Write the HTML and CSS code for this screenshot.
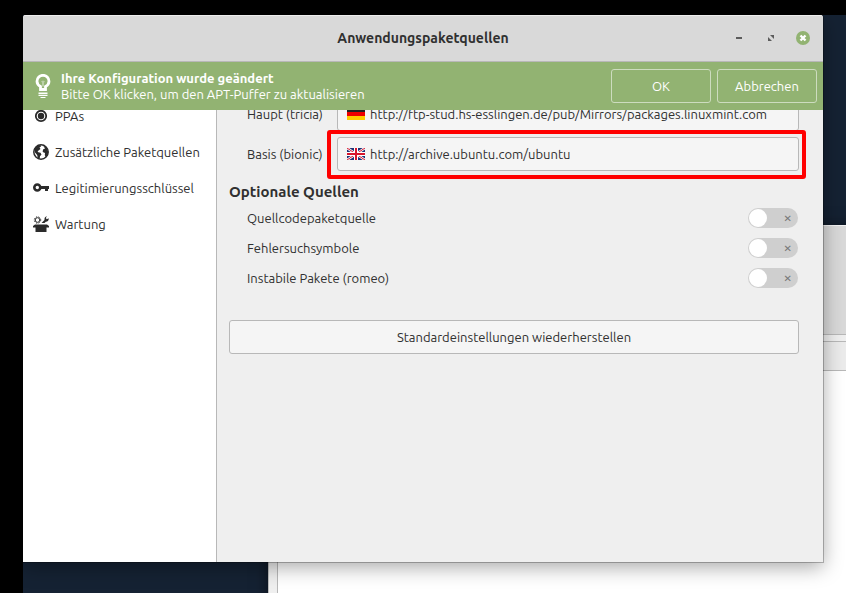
FILE: index.html
```html
<!DOCTYPE html>
<html lang="de">
<head>
    <meta charset="UTF-8">
    <meta name="viewport" content="width=device-width, initial-scale=1.0">
    <title>Anwendungspaketquellen</title>
    <link rel="stylesheet" href="styles.css">
</head>
<body>

    <div class="desktop">
        <div class="back-window">
            <div class="back-title"></div>
            <div class="back-toolbar"></div>
            <div class="back-page"></div>
        </div>

        <div class="window">
            <header class="titlebar">
                <h1>Anwendungspaketquellen</h1>
                <div class="window-buttons">
                    <button aria-label="Minimieren">
                        <svg width="16" height="16" viewBox="0 0 16 16"><path d="M5 7h6v2H5z" fill="#5c5c5c"/></svg>
                    </button>
                    <button aria-label="Maximieren">
                        <svg width="16" height="16" viewBox="0 0 16 16"><path d="M7 5h4v4zM5 7v4h4z" fill="#5c5c5c"/></svg>
                    </button>
                    <button aria-label="Schließen">
                        <svg width="16" height="16" viewBox="0 0 16 16"><circle cx="8" cy="8" r="7" fill="#92b372"/><path d="M5.500 5.500l5 5M10.500 5.500l-5 5" stroke="#fff" stroke-width="2.400"/></svg>
                    </button>
                </div>
            </header>

            <div class="infobar">
                <svg class="bulb" width="16" height="24" viewBox="0 0 16 24">
                    <path d="M5.500 15.500v-3C3.400 11.400 2 9.700 2 7.300a6 6 0 0 1 12 0c0 2.400-1.400 4.100-3.500 5.200v3z" fill="none" stroke="#fff" stroke-width="2.800"/>
                    <path d="M6 7.500l2-1 2 1-1 1v4H7v-4z" fill="#fff" opacity=".4"/>
                    <path d="M3.500 18.500h9V20h-9zM3.500 20.800h9V22h-9zM5.500 23h5v1h-5z" fill="#fff"/>
                </svg>
                <div class="info-text">
                    <strong>Ihre Konfiguration wurde geändert</strong>
                    <span>Bitte OK klicken, um den APT-Puffer zu aktualisieren</span>
                </div>
                <div class="info-actions">
                    <button>OK</button>
                    <button>Abbrechen</button>
                </div>
            </div>

            <div class="content">
                <nav class="sidebar">
                    <a href="#ppas">
                        <svg width="16" height="16" viewBox="0 0 16 16"><circle cx="8" cy="8" r="5.200" fill="none" stroke="#2b2b2b" stroke-width="1.800"/><circle cx="8" cy="8" r="3.200" fill="#2b2b2b"/></svg>
                        PPAs
                    </a>
                    <a href="#paketquellen">
                        <svg width="16" height="16" viewBox="0 0 16 16"><circle cx="8" cy="8" r="7.200" fill="#fff" stroke="#2b2b2b" stroke-width="1.500"/><path d="M1.200 6C2 3 4 1.300 7.500 1l.5 1.500-1.500 1L7.500 5 5.500 6.500 4.500 8l3 .8 1 1.700-1.500 1.700-.3 2.600-2-.7-.5-3L2 8.500zM10 1.300l4 2.700 1.200 4-.7 3.500-1.700 2-1-2.500.2-2-2.300-1L10 5.500l2-1z" fill="#2b2b2b"/></svg>
                        Zusätzliche Paketquellen
                    </a>
                    <a href="#schluessel">
                        <svg width="16" height="16" viewBox="0 0 16 16"><circle cx="4.300" cy="7.500" r="3" fill="none" stroke="#2b2b2b" stroke-width="2.600"/><path d="M8 6h8v3h-1v2h-3V9H8z" fill="#2b2b2b"/></svg>
                        Legitimierungsschlüssel
                    </a>
                    <a href="#wartung">
                        <svg width="16" height="16" viewBox="0 0 16 16"><circle cx="4.500" cy="4" r="2.300" fill="none" stroke="#2b2b2b" stroke-width="1"/><circle cx="4.500" cy="4" r="3.200" fill="none" stroke="#2b2b2b" stroke-width="1" stroke-dasharray="1.300"/><path d="M8.500 7l3-3c-.3-2 .5-3.300 2.500-3.800L12.800 2l1 1.200 1.900-1c.2 2.200-.9 3.400-2.900 3.600L11.500 7zM2 8.500h12l2 1.500v1.500h-2.500V16h-11v-4.500H0V10z" fill="#2b2b2b"/></svg>
                        Wartung
                    </a>
                </nav>

                <main class="settings">
                    <div class="mirrors">
                        <label for="main-mirror">Haupt (tricia)</label>
                        <div class="mirror">
                            <button id="main-mirror">
                                <svg width="18" height="12" viewBox="0 0 18 12"><path d="M0 0h18v4H0z" fill="#222"/><path d="M0 4h18v4H0z" fill="#e00"/><path d="M0 8h18v4H0z" fill="#fc0"/></svg>
                                http://ftp-stud.hs-esslingen.de/pub/Mirrors/packages.linuxmint.com
                            </button>
                        </div>
                        <label for="base-mirror">Basis (bionic)</label>
                        <div class="mirror marked">
                            <button id="base-mirror">
                                <svg width="18" height="12" viewBox="0 0 18 12"><path d="M0 0h18v12H0z" fill="#1f3277"/><path d="M0 0l18 12M18 0L0 12" stroke="#fff" stroke-width="2.400"/><path d="M0 0l18 12M18 0L0 12" stroke="#d8142c" stroke-width="1"/><path d="M9 0v12M0 6h18" stroke="#fff" stroke-width="4"/><path d="M9 0v12M0 6h18" stroke="#d8142c" stroke-width="2"/></svg>
                                http://archive.ubuntu.com/ubuntu
                            </button>
                        </div>
                    </div>

                    <h2>Optionale Quellen</h2>
                    <div class="options">
                        <div class="option">
                            <label for="source-code">Quellcodepaketquelle</label>
                            <input type="checkbox" class="switch" id="source-code">
                        </div>
                        <div class="option">
                            <label for="debug-symbols">Fehlersuchsymbole</label>
                            <input type="checkbox" class="switch" id="debug-symbols">
                        </div>
                        <div class="option">
                            <label for="unstable">Instabile Pakete (romeo)</label>
                            <input type="checkbox" class="switch" id="unstable">
                        </div>
                    </div>

                    <button class="restore">Standardeinstellungen wiederherstellen</button>
                </main>
            </div>
        </div>
    </div>

</body>
</html>
```

FILE: styles.css
```css
* {
    box-sizing: border-box;
}

body {
    margin: 0;
    height: 100vh;
    padding: 15px 0 0 23px;
    background-color: #000;
    color: #303030;
    font-family: Ubuntu, "Noto Sans", sans-serif;
    font-size: 13px;
    line-height: 16px;
    overflow: hidden;
}

button {
    font: inherit;
    color: inherit;
    cursor: pointer;
}

.desktop {
    position: relative;
    height: 100%;
    background-color: #152233;
    overflow: hidden;
}

/* window behind the dialog */
.back-window {
    position: absolute;
    top: 210px;
    left: 245px;
    right: -40px;
    bottom: -40px;
    display: flex;
    flex-direction: column;
    background-color: #efefef;
    border-top: 1px solid #f3f3f3;
    border-left: 1px solid #bbb;
    box-shadow: 0 2px 14px rgba(0, 0, 0, 0.5);
}

.back-title {
    height: 109px;
    background-color: #d9d9d9;
    border-bottom: 1px solid #b8b8b8;
}

.back-toolbar {
    height: 30px;
    margin: 6px 0 0 8px;
    background-color: #ebebeb;
    border: 1px solid #b8b8b8;
}

.back-page {
    flex: 1;
    margin-left: 8px;
    background-color: #fff;
    border-left: 1px solid #b8b8b8;
}

/* dialog */
.window {
    position: absolute;
    top: 0;
    left: 0;
    right: 23px;
    bottom: 31px;
    display: flex;
    flex-direction: column;
    background-color: #efefef;
    border-radius: 3px 3px 0 0;
    box-shadow: 0 0 0 1px rgba(0, 0, 0, 0.25), 0 5px 20px rgba(0, 0, 0, 0.35);
    overflow: hidden;
}

.titlebar {
    display: grid;
    grid-template-columns: 1fr auto 1fr;
    align-items: center;
    height: 47px;
    padding-bottom: 2px;
    background-color: #d9d9d9;
    border-top: 1px solid #eee;
    border-bottom: 1px solid #b8b8b8;
}

.titlebar h1 {
    grid-column: 2;
    margin: 0;
    font-size: 14px;
}

.window-buttons {
    display: flex;
    justify-content: flex-end;
    gap: 16px;
    padding-right: 12px;
}

.window-buttons button {
    display: flex;
    padding: 0;
    border: none;
    background: none;
}

.infobar {
    display: flex;
    align-items: center;
    gap: 10px;
    height: 48px;
    padding: 0 6px 0 12px;
    background-color: #92b372;
    color: #fff;
}

.info-text {
    display: flex;
    flex: 1;
    flex-direction: column;
}

.info-actions {
    display: flex;
    gap: 6px;
}

.info-actions button {
    width: 100px;
    height: 34px;
    background: none;
    border: 1px solid #cddcbf;
    border-radius: 3px;
}

.content {
    display: flex;
    flex: 1;
    min-height: 0;
    overflow: hidden;
}

.sidebar {
    width: 194px;
    padding-left: 10px;
    background-color: #fff;
    border-right: 1px solid #b8b8b8;
    white-space: nowrap;
}

.sidebar a {
    display: flex;
    align-items: center;
    gap: 6px;
    height: 36px;
    color: inherit;
    text-decoration: none;
}

/* both panes are scrolled a little under the info bar */
.sidebar a:first-child {
    margin-top: -12px;
}

.mirrors {
    display: grid;
    grid-template-columns: 84px 1fr;
    align-items: center;
    gap: 6px;
    margin-top: -13px;
    padding-left: 18px;
    white-space: nowrap;
}

.settings {
    flex: 1;
    padding: 0 24px 0 12px;
}

.mirror {
    position: relative;
}

.mirror button {
    display: flex;
    align-items: center;
    gap: 5px;
    width: 100%;
    height: 34px;
    padding: 0 9px;
    background-color: #f5f5f5;
    border: 1px solid #b8b8b8;
    border-radius: 3px;
}

.marked::after {
    content: "";
    position: absolute;
    inset: -7px -7px -8px -10px;
    border: 4px solid #f00;
    border-radius: 3px;
    pointer-events: none;
}

.settings h2 {
    margin: 10px 0 0;
    font-size: 15px;
    line-height: 22px;
}

.options {
    padding-left: 18px;
}

.option {
    display: flex;
    align-items: center;
    justify-content: space-between;
    height: 30px;
}

.switch {
    appearance: none;
    display: flex;
    align-items: center;
    justify-content: space-between;
    width: 50px;
    height: 20px;
    margin: 0 1px 0 0;
    padding: 0 6px 0 1px;
    background-color: #cfcfcf;
    border-radius: 10px;
    cursor: pointer;
}

.switch::before {
    content: "";
    width: 18px;
    height: 18px;
    background-color: #fff;
    border-radius: 50%;
}

.switch::after {
    content: "✕";
    color: #777;
    font-family: "DejaVu Sans", sans-serif;
    font-size: 10px;
    font-weight: bold;
}

.switch:checked {
    flex-direction: row-reverse;
    background-color: #92b372;
}

.restore {
    width: 100%;
    height: 34px;
    margin-top: 27px;
    background-color: #f5f5f5;
    border: 1px solid #b8b8b8;
    border-radius: 3px;
}
```
